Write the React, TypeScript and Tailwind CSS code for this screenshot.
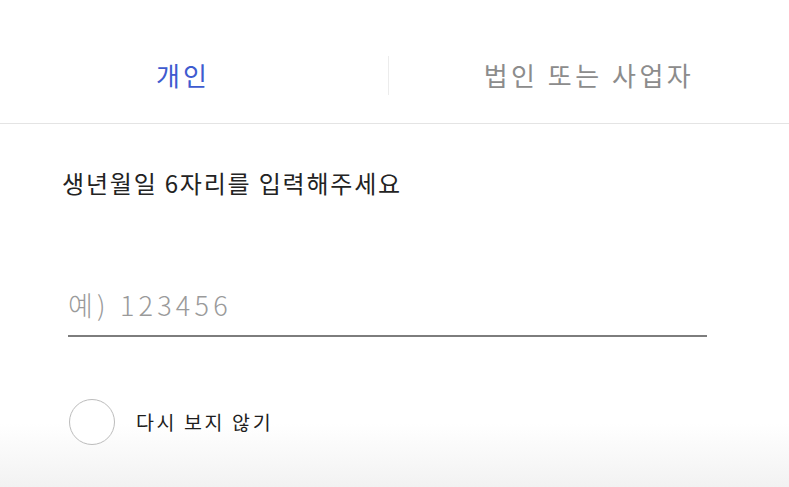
import React from "react";

export default function App() {
  const font = { fontFamily: '"Noto Sans CJK KR", "Noto Sans", sans-serif' };
  return (
    <div
      className="w-[789px] h-[487px] overflow-hidden bg-[linear-gradient(to_bottom,#ffffff_0%,#ffffff_87%,#f2f2f2_100%)] flex flex-col"
      style={font}
    >
      <div className="h-[124px] border-b border-[#e4e4e4] flex items-center pt-[27px] shrink-0">
        <div className="w-[366px] flex justify-center">
          <span className="text-[26px] leading-none tracking-[3px] text-[#3e5bcf]">개인</span>
        </div>
        <div className="w-[22px]" />
        <div className="w-px h-[39px] bg-[#ececec]" />
        <div className="flex-1 flex justify-center">
          <span className="text-[26px] leading-none tracking-[3.5px] text-[#8c8c8c]">법인 또는 사업자</span>
        </div>
      </div>

      <div className="pl-[62px] pt-[41px] flex flex-col">
        <div className="text-[24px] leading-[36px] tracking-[1.8px] text-[#232323]">생년월일 6자리를 입력해주세요</div>

        <div className="mt-[86px] ml-[6px] w-[639px] border-b-2 border-[#7d7d7d] pb-[12px]">
          <input
            className="w-full bg-transparent outline-none text-[27px] leading-[36px] font-light tracking-[4.2px] text-[#333] placeholder:text-[#9a9a9a]"
            placeholder="예) 123456"
            style={font}
          />
        </div>

        <div className="mt-[62px] ml-[7px] flex items-center gap-[21px]">
          <div className="w-[46px] h-[46px] rounded-full border-[1.5px] border-[#bcbcbc] bg-white" />
          <span className="text-[19.5px] leading-none tracking-[2.6px] text-[#1e1e1e]">다시 보지 않기</span>
        </div>
      </div>
    </div>
  );
}
